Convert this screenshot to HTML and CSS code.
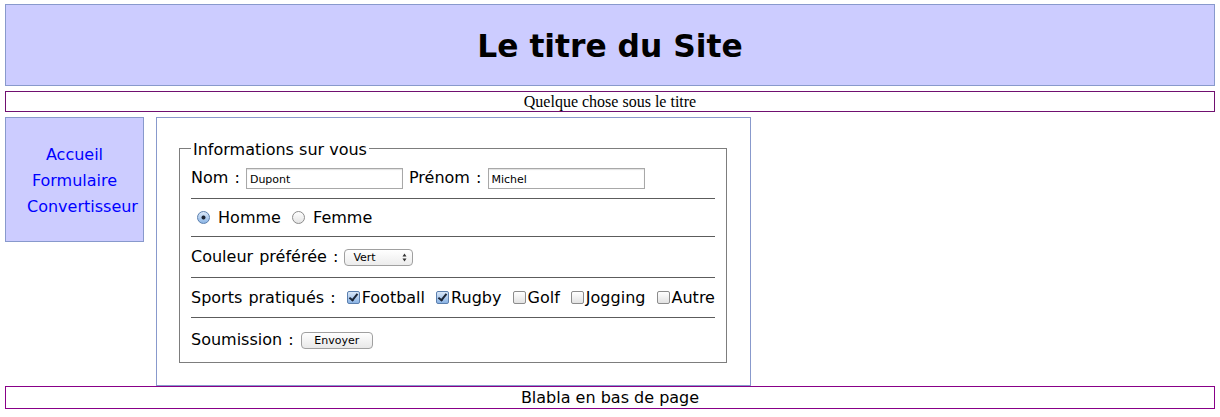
FILE: index.html
```html
<!DOCTYPE html>
<html lang="fr">
<head>
<meta charset="utf-8">
<title>Le titre du Site</title>
<link rel="stylesheet" href="styles.css">
</head>
<body>
<header class="site-header"><h1>Le titre du Site</h1></header>
<div class="subtitle">Quelque chose sous le titre</div>
<div class="layout">
  <nav class="nav">
    <a href="#">Accueil</a>
    <a href="#">Formulaire</a>
    <a href="#">Convertisseur</a>
  </nav>
  <main class="main">
    <form>
      <fieldset class="fs">
        <legend>Informations sur vous</legend>
        <div class="row r1"><div class="line">Nom : <input type="text" class="txt" value="Dupont"> Prénom : <input type="text" class="txt" value="Michel"></div></div>
        <div class="sep"></div>
        <div class="row r2"><div class="line radios"><input type="radio" name="g" checked> Homme <input type="radio" name="g"> Femme</div></div>
        <div class="sep"></div>
        <div class="row r3"><div class="line">Couleur préférée : <span class="selwrap"><select class="sel"><option>Vert</option><option>Rouge</option><option>Bleu</option></select><svg class="arrows" width="5" height="9" viewBox="0 0 5 9"><path d="M0.5 3.5 L2.5 0.5 L4.5 3.5 Z M0.5 5.5 L2.5 8.5 L4.5 5.5 Z" fill="#333"/></svg></span></div></div>
        <div class="sep"></div>
        <div class="row r4"><div class="line">Sports pratiqués : <input type="checkbox" checked>Football <input type="checkbox" checked>Rugby <input type="checkbox">Golf <input type="checkbox">Jogging <input type="checkbox">Autre</div></div>
        <div class="sep"></div>
        <div class="row r5"><div class="line">Soumission : <button type="button" class="btn">Envoyer</button></div></div>
      </fieldset>
    </form>
  </main>
</div>
<footer class="footer">Blabla en bas de page</footer>
</body>
</html>
```

FILE: styles.css
```css
html, body { background: #fff; }
body {
  margin: 4px 5px 0 5px;
  font-family: "DejaVu Sans", Verdana, sans-serif;
  font-size: 16px;
  color: #000;
}
.site-header {
  height: 80px;
  background: #ccccff;
  border: 1px solid #8899cc;
  display: flex;
  align-items: center;
  justify-content: center;
}
.site-header h1 {
  margin: 2px 0 0 0;
  font-family: "DejaVu Sans", Verdana, sans-serif;
  font-weight: bold;
  font-size: 31.3px;
  line-height: 40px;
}
.subtitle {
  margin-top: 5px;
  border: 1px solid #701070;
  font-family: "Liberation Serif", "Times New Roman", serif;
  font-size: 16px;
  line-height: 19px;
  text-align: center;
}
.layout {
  margin-top: 5px;
  display: flex;
  align-items: flex-start;
  gap: 12px;
}
.nav {
  width: 95px;
  padding: 24px 21px 21px 21px;
  background: #ccccff;
  border: 1px solid #8899cc;
  text-align: center;
}
.nav a {
  display: block;
  color: #0000ff;
  text-decoration: none;
  line-height: 26px;
  white-space: nowrap;
}
.main {
  width: 593px;
  border: 1px solid #8899cc;
  background: #fff;
}
.main form { margin: 0; }
.fs {
  margin: 19px 23px 22px 22px;
  padding: 0 11px;
  border: 1px solid #7d7d7d;
  min-width: 0;
}
.fs legend {
  padding: 4px 2px 0 2px;
  line-height: 18px;
  font-size: 16px;
}
.row {
  display: flex;
  align-items: center;
  white-space: nowrap;
}
.r1 { height: 39px; }
.r2 { height: 37px; }
.r3 { height: 40px; }
.r4 { height: 39px; }
.r5 { height: 44px; }
.line { line-height: 20px; word-spacing: 1px; }
.line.radios { word-spacing: 0; }
.sep {
  height: 0;
  border-top: 1px solid #5c5c5c;
}
.txt {
  box-sizing: border-box;
  width: 157px;
  height: 21px;
  margin: 0;
  padding: 1px 3px 0;
  border: 1px solid #a8a8a8;
  box-shadow: inset 0 1px 1px rgba(0,0,0,0.12);
  font-family: "DejaVu Sans", Verdana, sans-serif;
  font-size: 11px;
  word-spacing: 0;
  color: #000;
  vertical-align: middle;
}
input[type=radio] {
  -webkit-appearance: none;
  appearance: none;
  box-sizing: border-box;
  width: 13px;
  height: 13px;
  margin: 0 3px 0 6px;
  border: 1px solid #8c8c8c;
  border-radius: 50%;
  background: linear-gradient(#ffffff, #e4e4e4);
  vertical-align: middle;
  position: relative;
  top: -1px;
}
input[type=radio]:checked {
  border-color: #5b7fae;
  background: radial-gradient(circle at 50% 50%, #1d2433 0, #1d2433 1.6px, rgba(0,0,0,0) 2.4px),
              linear-gradient(#dbe8f8, #8db6e6);
}
input[type=checkbox] {
  -webkit-appearance: none;
  appearance: none;
  box-sizing: border-box;
  width: 13px;
  height: 13px;
  margin: 0 2px 0 5px;
  border: 1px solid #8c8c8c;
  border-radius: 2px;
  background: linear-gradient(#ffffff, #e2e2e2);
  vertical-align: middle;
  position: relative;
  top: -1px;
}
input[type=checkbox]:checked {
  border-color: #5b7fae;
  background: linear-gradient(#d9e7f8, #8ab3e4);
}
input[type=checkbox]:checked::after {
  content: "";
  position: absolute;
  left: 3px;
  top: 0px;
  width: 3px;
  height: 7px;
  border: solid #1b2536;
  border-width: 0 2px 2px 0;
  transform: rotate(38deg);
}
.selwrap {
  position: relative;
  display: inline-block;
  vertical-align: middle;
  line-height: 0;
}
.sel {
  -webkit-appearance: none;
  appearance: none;
  box-sizing: border-box;
  width: 69px;
  height: 17px;
  margin: 0;
  padding: 0 0 0 8px;
  border: 1px solid #a0a0a0;
  border-radius: 4px;
  background: linear-gradient(#ffffff, #ececec);
  font-family: "DejaVu Sans", Verdana, sans-serif;
  font-size: 11px;
  line-height: 15px;
  color: #000;
}
.arrows {
  position: absolute;
  right: 6px;
  top: 4px;
}
.btn {
  -webkit-appearance: none;
  appearance: none;
  box-sizing: border-box;
  width: 72px;
  height: 17px;
  margin: 0 0 0 1px;
  padding: 0;
  border: 1px solid #a0a0a0;
  border-radius: 4px;
  background: linear-gradient(#ffffff, #e8e8e8);
  font-family: "DejaVu Sans", Verdana, sans-serif;
  font-size: 11px;
  line-height: 15px;
  word-spacing: 0;
  color: #000;
  vertical-align: middle;
}
.footer {
  border: 1px solid #880088;
  line-height: 21px;
  text-align: center;
  font-size: 16px;
}
```
